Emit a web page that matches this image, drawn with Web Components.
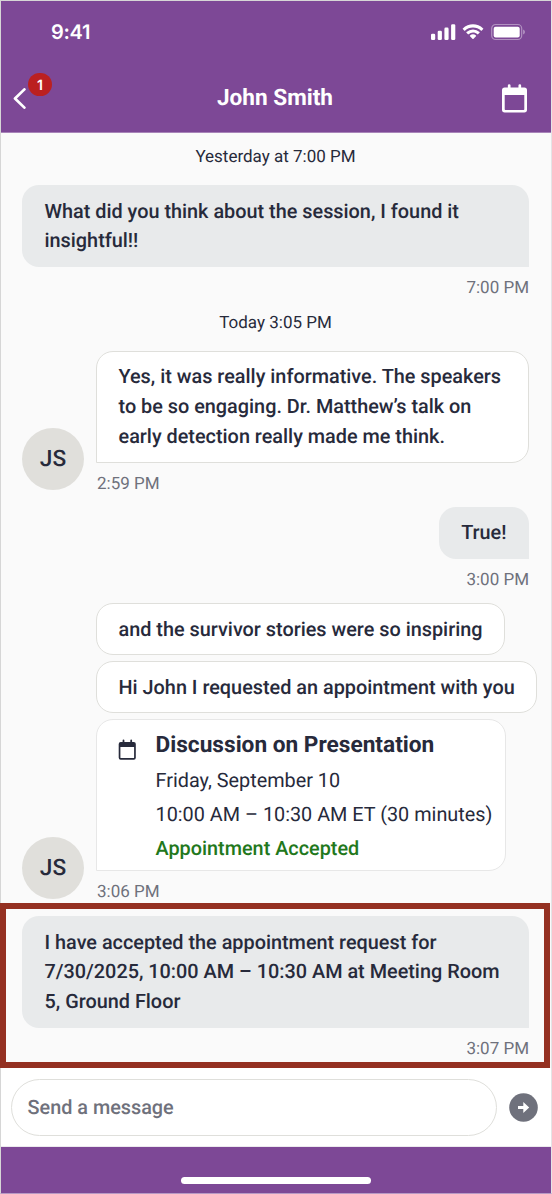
<!DOCTYPE html>
<html lang="en">
<head>
<meta charset="utf-8">
<title>John Smith</title>
<style>
    html, body{
        margin: 0;
        padding: 0;
        background: #ffffff;
    }
    body{
        --purple: #7d4896;
        --ink: #272a3b;
        --muted: #6f717c;
        --line: #dfdfdb;
        width: 552px;
        height: 1194px;
        overflow: hidden;
        font-family: Roboto, "Liberation Sans", sans-serif;
        text-rendering: geometricPrecision;
        color: var(--ink);
    }
</style>
</head>
<body>
<chat-screen>
    <status-bar slot="top">9:41</status-bar>
    <chat-header slot="top" count="1">John Smith</chat-header>

    <day-label>Yesterday at 7:00 PM</day-label>
    <message-group side="out" style="margin-top:18px">
        <chat-bubble kind="out" class="wide">What did you think about the session, I found it<br>insightful!!</chat-bubble>
        <span slot="time">7:00 PM</span>
    </message-group>

    <day-label style="margin-top:14.5px">Today 3:05 PM</day-label>
    <message-group side="in" initials="JS" style="margin-top:18.3px">
        <chat-bubble kind="in" tail class="wide">Yes, it was really informative. The speakers<br>to be so engaging. Dr. Matthew’s talk on<br>early detection really made me think.</chat-bubble>
        <span slot="time">2:59 PM</span>
    </message-group>
    <message-group side="out" style="margin-top:13px">
        <chat-bubble kind="out">True!</chat-bubble>
        <span slot="time">3:00 PM</span>
    </message-group>
    <message-group side="in" initials="JS" style="margin-top:13.2px">
        <chat-bubble kind="in">and the survivor stories were so inspiring</chat-bubble>
        <chat-bubble kind="in">Hi John I requested an appointment with you</chat-bubble>
        <appointment-card>
            <span slot="title">Discussion on Presentation</span>
            <span slot="date">Friday, September 10</span>
            <span slot="hours">10:00 AM – 10:30 AM ET (30 minutes)</span>
            <span slot="state">Appointment Accepted</span>
        </appointment-card>
        <span slot="time">3:06 PM</span>
    </message-group>
    <message-highlight>
        <message-group side="out">
            <chat-bubble kind="out" class="wide">I have accepted the appointment request for<br>7/30/2025, 10:00 AM – 10:30 AM at Meeting Room<br>5, Ground Floor</chat-bubble>
            <span slot="time">3:07 PM</span>
        </message-group>
    </message-highlight>

    <message-composer slot="bottom">Send a message</message-composer>
    <home-bar slot="bottom"></home-bar>
</chat-screen>

<script>
// small helper, every element just clones its markup into an open root
class BaseElement extends HTMLElement {
    constructor(){
        super()
        this.attachShadow({ mode: 'open' })
        const template = document.createElement('template')
        template.innerHTML = this.markup()
        this.shadowRoot.appendChild(template.content.cloneNode(true))
    }
}

//SCREEN: HEADER, THREAD, FOOTER
class ChatScreen extends BaseElement {
    markup(){
        return `
    <style>
        :host{
            display: flex;
            flex-direction: column;
            box-sizing: border-box;
            width: 552px;
            height: 1194px;
            border: 1px solid #d6d6d6;
            border-right-color: #e4e4e6;
            border-bottom-color: #b799c5;
        }
        main{
            flex: none;
            box-sizing: border-box;
            height: 935px;
            padding: 14px 22px 0 21px;
            background: #fafafa;
            display: flex;
            flex-direction: column;
        }
    </style>
    <slot name="top"></slot>
    <main><slot></slot></main>
    <slot name="bottom"></slot>`
    }
}

class StatusBar extends BaseElement {
    markup(){
        return `
    <style>
        :host{
            display: flex;
            justify-content: space-between;
            align-items: center;
            height: 61px;
            padding: 0 25px 0 50px;
            background: var(--purple);
            color: #fff;
            font: 600 20px/24px Inter, "Liberation Sans", sans-serif;
            letter-spacing: -0.3px;
        }
        svg{
            display: block;
        }
    </style>
    <slot></slot>
    <svg width="95" height="18" viewBox="0 0 95 18">
        <g fill="#fff">
            <rect x="0" y="10.8" width="4.2" height="6.2" rx="1.3"/>
            <rect x="6.7" y="7.8" width="4.2" height="9.2" rx="1.3"/>
            <rect x="13.4" y="4.6" width="4.2" height="12.4" rx="1.3"/>
            <rect x="20.1" y="1.2" width="4.2" height="15.8" rx="1.3"/>
            <path d="M42 4.4c3 0 5.9 1.15 8.05 3.25.17.16.43.16.59-.01l1.56-1.6a.45.45 0 0 0 0-.64c-5.7-5.45-14.7-5.45-20.4 0a.45.45 0 0 0 0 .64l1.56 1.6c.16.17.42.17.59.01A11.5 11.5 0 0 1 42 4.4z"/>
            <path d="M42 9.6c1.65 0 3.2.6 4.4 1.7.17.16.43.16.59-.01l1.56-1.6a.45.45 0 0 0 0-.65 9.5 9.5 0 0 0-13.1 0 .45.45 0 0 0 0 .65l1.56 1.6c.16.17.42.17.59.01A6.55 6.55 0 0 1 42 9.6z"/>
            <path d="M45 13.2a.45.45 0 0 0-.01-.67 4.6 4.6 0 0 0-5.98 0 .45.45 0 0 0-.01.67l2.69 2.75c.17.17.45.17.62 0z"/>
        </g>
        <rect x="60.7" y="1.5" width="30" height="15" rx="4" fill="none" stroke="#fff" stroke-opacity=".4" stroke-width="1.2"/>
        <rect x="62.7" y="3.7" width="26" height="10.7" rx="2" fill="#fff"/>
        <path d="M92.2 6.5v5c1-.4 1.7-1.4 1.7-2.5s-.7-2.1-1.7-2.5z" fill="#fff" opacity=".45"/>
    </svg>`
    }
}

class ChatHeader extends BaseElement {
    markup(){
        return `
    <style>
        :host{
            display: grid;
            grid-template-columns: 60px 1fr 60px;
            align-items: center;
            box-sizing: border-box;
            height: 71px;
            border-bottom: 1px solid #a884b9;
            background: var(--purple);
            color: #fff;
        }
        .back{
            position: relative;
            height: 71px;
        }
        .back svg{
            display: block;
            margin: 25.5px 0 0 12px;
        }
        .badge{
            position: absolute;
            left: 27px;
            top: 11px;
            width: 24px;
            height: 23px;
            border-radius: 12px;
            background: #bb2020;
            text-align: center;
            font: 600 14px/25px Inter, "Liberation Sans", sans-serif;
        }
        h1{
            margin: 0;
            padding-right: 2px;
            text-align: center;
            font-size: 22.6px;
            line-height: 30px;
            font-weight: 700;
        }
        .calendar{
            display: block;
            margin: 2px 0 0 10px;
        }
    </style>
    <div class="back">
        <svg width="13" height="21" viewBox="0 0 13 21">
            <path d="M11.4 1.4 2 10.5l9.4 9.1" fill="none" stroke="#fff" stroke-width="2.7" stroke-linecap="round" stroke-linejoin="round"/>
        </svg>
        <span class="badge"></span>
    </div>
    <h1><slot></slot></h1>
    <svg class="calendar" width="27" height="30" viewBox="0 0 27 30">
        <path d="M3.7 3.5H23.3a2.7 2.7 0 0 1 2.7 2.7V25.8a2.7 2.7 0 0 1-2.7 2.7H3.7a2.7 2.7 0 0 1-2.7-2.7V6.2a2.7 2.7 0 0 1 2.7-2.7zM3.7 11v14.3a.6.6 0 0 0 .6.6H22.7a.6.6 0 0 0 .6-.6V11z" fill="#fff" fill-rule="evenodd"/>
        <path d="M8.2 1.5V5M18.8 1.5V5" stroke="#fff" stroke-width="2.7" stroke-linecap="round"/>
    </svg>`
    }
    connectedCallback(){
        this.shadowRoot.querySelector('.badge').textContent = this.getAttribute('count')
    }
}

class DayLabel extends BaseElement {
    markup(){
        return `
    <style>
        :host{
            display: block;
            flex: none;
            height: 20px;
            text-align: center;
            font-size: 17px;
            line-height: 20px;
        }
    </style>
    <slot></slot>`
    }
}

//BUBBLES OF ONE SENDER, WITH AVATAR ON THE LEFT FOR INCOMING ONES
class MessageGroup extends BaseElement {
    markup(){
        return `
    <style>
        :host{
            display: flex;
            align-items: flex-end;
            gap: 12px;
            flex: none;
        }
        .avatar{
            flex: none;
            width: 62px;
            height: 62px;
            margin-bottom: 3.7px;
            border-radius: 50%;
            background: #e0dfdb;
            text-align: center;
            font-size: 22.67px;
            line-height: 62px;
            font-weight: 500;
        }
        :host([side="out"]) .avatar{
            display: none;
        }
        .stack{
            flex: 1;
            min-width: 0;
            display: flex;
            flex-direction: column;
            align-items: flex-start;
            gap: 6px;
        }
        :host([side="out"]) .stack{
            align-items: flex-end;
        }
        .time{
            margin-top: 5px;
            padding-left: 1px;
            color: var(--muted);
            font-size: 17px;
            line-height: 20px;
        }
    </style>
    <div class="avatar"></div>
    <div class="stack">
        <slot></slot>
        <div class="time"><slot name="time"></slot></div>
    </div>`
    }
    connectedCallback(){
        this.shadowRoot.querySelector('.avatar').textContent = this.getAttribute('initials') || ''
    }
}

class ChatBubble extends BaseElement {
    markup(){
        return `
    <style>
        :host{
            display: block;
            box-sizing: border-box;
            padding: 11.5px 22.5px 11px;
            border-radius: 17px;
            font-size: 19.85px;
            line-height: 29.75px;
            font-weight: 500;
            white-space: nowrap;
        }
        :host(.wide){
            width: 100%;
        }
        :host([kind="out"]){
            background: #e8eaeb;
            border-bottom-right-radius: 0;
        }
        :host([kind="in"]){
            padding: 10.6px 21.5px 9.9px;
            background: #fff;
            border: 1px solid var(--line);
        }
        :host([tail]){
            border-bottom-left-radius: 0;
        }
    </style>
    <slot></slot>`
    }
}

class AppointmentCard extends BaseElement {
    markup(){
        return `
    <style>
        :host{
            display: flex;
            box-sizing: border-box;
            width: 410px;
            height: 152px;
            padding: 7.5px 0 0 21px;
            border: 1px solid #e7e7e7;
            border-radius: 17px 17px 17px 0;
            background: #fff;
            white-space: nowrap;
        }
        svg{
            flex: none;
            margin: 11.5px 17.5px 0 0;
        }
        .title{
            font-size: 22.67px;
            line-height: 34px;
            font-weight: 700;
            margin-bottom: 2px;
        }
        .line{
            font-size: 19.83px;
            line-height: 34px;
        }
        .state{
            color: #22781c;
            font-weight: 500;
        }
    </style>
    <svg width="20" height="22" viewBox="0 0 20 22">
        <path d="M2.7 3H15.8a2 2 0 0 1 2 2V18.7a2 2 0 0 1-2 2H2.7A2 2 0 0 1 .7 18.7V5a2 2 0 0 1 2-2zM2.4 8v10.4a.7.7 0 0 0 .7.7h12.3a.7.7 0 0 0 .7-.7V8z" fill="#272a3b" fill-rule="evenodd"/>
        <path d="M5.5 1.5V4M13.2 1.5V4" stroke="#272a3b" stroke-width="1.8" stroke-linecap="round"/>
    </svg>
    <div>
        <div class="title"><slot name="title"></slot></div>
        <div class="line"><slot name="date"></slot></div>
        <div class="line"><slot name="hours"></slot></div>
        <div class="line state"><slot name="state"></slot></div>
    </div>`
    }
}

//sits at the bottom of the thread, pulled out over its side padding
class MessageHighlight extends BaseElement {
    markup(){
        return `
    <style>
        :host{
            display: block;
            flex: none;
            box-sizing: border-box;
            height: 165px;
            margin: auto -21px 0 -22px;
            padding: 7px 15px 0 16px;
            border: 6px solid #943021;
        }
    </style>
    <slot></slot>`
    }
}

class MessageComposer extends BaseElement {
    markup(){
        return `
    <style>
        :host{
            display: flex;
            align-items: center;
            box-sizing: border-box;
            height: 79px;
            padding: 0 13px 0 10px;
            gap: 12px;
            border-bottom: 1px solid #eceaee;
            background: #fff;
        }
        .field{
            flex: 1;
            box-sizing: border-box;
            height: 57px;
            padding-left: 15.5px;
            border: 1px solid var(--line);
            border-radius: 28.5px;
            color: var(--muted);
            font-size: 19.83px;
            line-height: 55px;
            font-weight: 500;
        }
        svg{
            flex: none;
        }
    </style>
    <div class="field"><slot></slot></div>
    <svg width="29" height="29" viewBox="0 0 29 29">
        <circle cx="14.5" cy="14.5" r="14.3" fill="#6f717c"/>
        <path d="M9 13.1h5.3V9l5.9 5.5-5.9 5.5v-4.1H9z" fill="#fff"/>
    </svg>`
    }
}

class HomeBar extends BaseElement {
    markup(){
        return `
    <style>
        :host{
            display: flex;
            justify-content: center;
            align-items: flex-end;
            box-sizing: border-box;
            flex: 1;
            padding-bottom: 9px;
            background: var(--purple);
        }
        div{
            width: 190px;
            height: 7px;
            margin-right: 1px;
            border-radius: 4px;
            background: #fff;
        }
    </style>
    <div></div>`
    }
}

window.customElements.define('chat-screen', ChatScreen)
window.customElements.define('status-bar', StatusBar)
window.customElements.define('chat-header', ChatHeader)
window.customElements.define('day-label', DayLabel)
window.customElements.define('message-group', MessageGroup)
window.customElements.define('chat-bubble', ChatBubble)
window.customElements.define('appointment-card', AppointmentCard)
window.customElements.define('message-highlight', MessageHighlight)
window.customElements.define('message-composer', MessageComposer)
window.customElements.define('home-bar', HomeBar)
</script>
</body>
</html>
